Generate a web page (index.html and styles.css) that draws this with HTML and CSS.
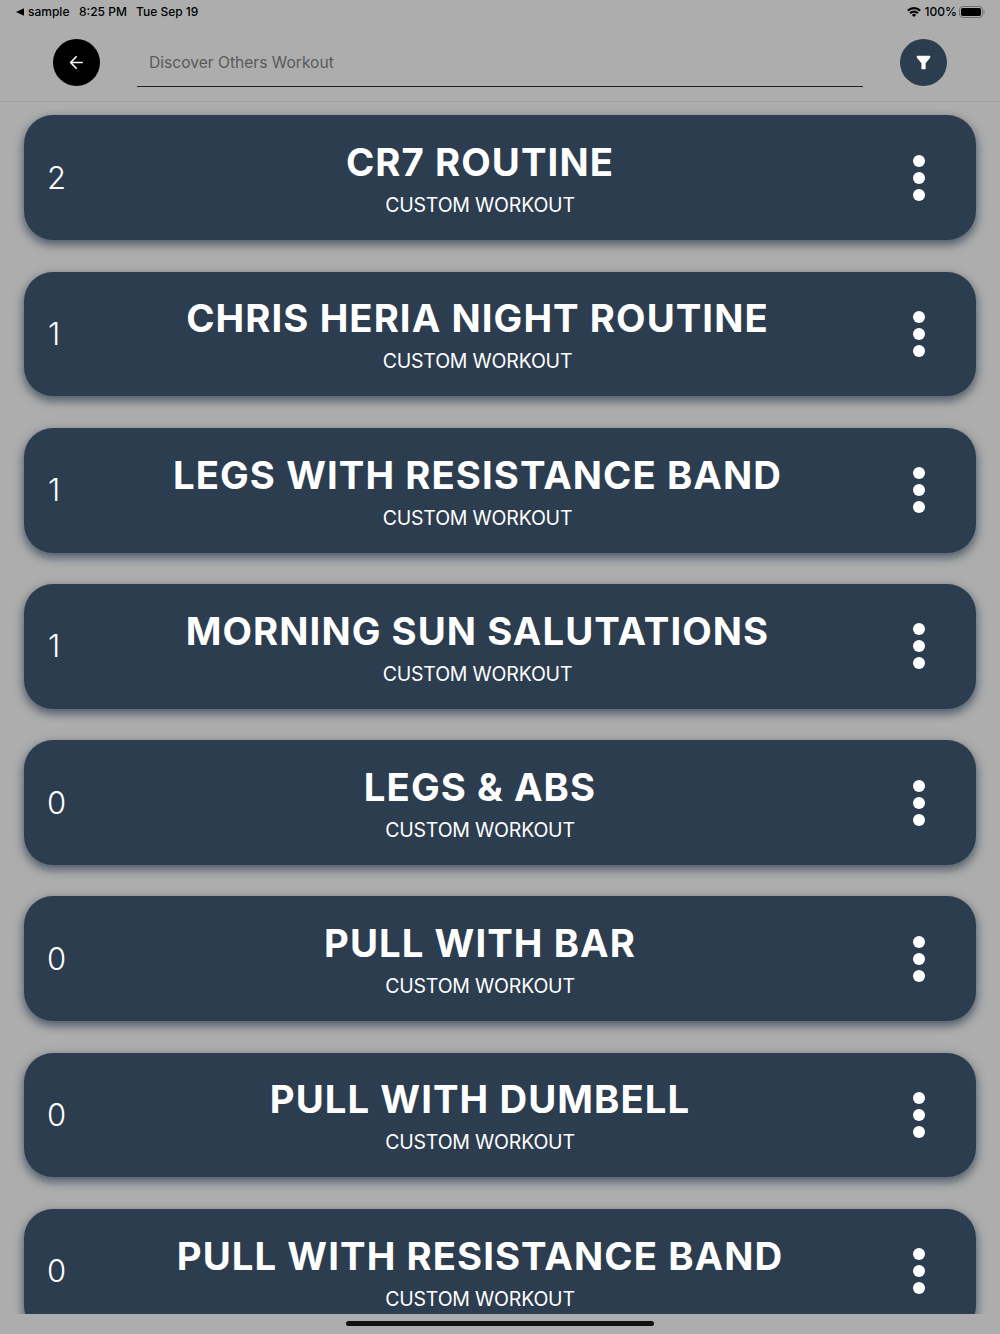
FILE: index.html
```html
<!DOCTYPE html>
<html lang="en">
<head>
  <meta charset="UTF-8" />
  <meta name="viewport" content="width=device-width, initial-scale=1.0"/>
  <title>Discover Workouts</title>
  <link rel="stylesheet" href="styles.css">
</head>
<body>
  <div class="status-bar">
    <div class="status-left">
      <svg width="8" height="8" viewBox="0 0 8 8"><path d="M8 0.3v7.4L0 4z"/></svg>
      <span class="app-name">sample</span>
      <span class="time">8:25 PM</span>
      <span class="date">Tue Sep 19</span>
    </div>
    <div class="status-right">
      <svg class="wifi" width="14" height="10" viewBox="0 0 14 10" fill="none" stroke="#000" stroke-width="2.1">
        <path d="M0.8 3.7a8.8 8.8 0 0 1 12.4 0"/>
        <path d="M3.1 6.2a5.6 5.6 0 0 1 7.8 0"/>
        <path d="M7 10L4.9 7.9a3 3 0 0 1 4.2 0z" fill="#000" stroke="none"/>
      </svg>
      <span class="percent">100%</span>
      <svg width="26" height="12" viewBox="0 0 26 12">
        <rect x="0.5" y="0.5" width="23" height="11" rx="3.2" fill="none" stroke="#6f6f6f"/>
        <rect x="2" y="2" width="20" height="8" rx="1.8"/>
        <path d="M24.6 4c1.3.4 1.3 3.6 0 4z" fill="#6f6f6f"/>
      </svg>
    </div>
  </div>

  <header class="header">
    <button class="round-btn back-btn">
      <svg width="15" height="15" viewBox="0 0 15 15" fill="none" stroke="#fff" stroke-width="1.6" stroke-linecap="round" stroke-linejoin="round">
        <path d="M13.2 7.5H1.6M7.2 1.8L1.6 7.5l5.6 5.7"/>
      </svg>
    </button>
    <input class="search" type="text" placeholder="Discover Others Workout">
    <button class="round-btn filter-btn">
      <svg width="15" height="15" viewBox="0 0 14 14" fill="#fff">
        <path d="M1.2 0.7h11.6q.5 0 .5.5v1.2L9 7.6v5.2q0 .6-.6.6H5.7q-.6 0-.6-.6V7.6L.7 2.4V1.2q0-.5.5-.5z"/>
      </svg>
    </button>
  </header>

  <main class="list">
    <div class="card">
      <span class="count">2</span>
      <div class="info"><h2>CR7 ROUTINE</h2><p>CUSTOM WORKOUT</p></div>
      <div class="dots"><i></i><i></i><i></i></div>
    </div>
    <div class="card">
      <span class="count one">1</span>
      <div class="info"><h2>CHRIS HERIA NIGHT ROUTINE</h2><p>CUSTOM WORKOUT</p></div>
      <div class="dots"><i></i><i></i><i></i></div>
    </div>
    <div class="card">
      <span class="count one">1</span>
      <div class="info"><h2>LEGS WITH RESISTANCE BAND</h2><p>CUSTOM WORKOUT</p></div>
      <div class="dots"><i></i><i></i><i></i></div>
    </div>
    <div class="card">
      <span class="count one">1</span>
      <div class="info"><h2>MORNING SUN SALUTATIONS</h2><p>CUSTOM WORKOUT</p></div>
      <div class="dots"><i></i><i></i><i></i></div>
    </div>
    <div class="card">
      <span class="count">0</span>
      <div class="info"><h2>LEGS &amp; ABS</h2><p>CUSTOM WORKOUT</p></div>
      <div class="dots"><i></i><i></i><i></i></div>
    </div>
    <div class="card">
      <span class="count">0</span>
      <div class="info"><h2>PULL WITH BAR</h2><p>CUSTOM WORKOUT</p></div>
      <div class="dots"><i></i><i></i><i></i></div>
    </div>
    <div class="card">
      <span class="count">0</span>
      <div class="info"><h2>PULL WITH DUMBELL</h2><p>CUSTOM WORKOUT</p></div>
      <div class="dots"><i></i><i></i><i></i></div>
    </div>
    <div class="card">
      <span class="count">0</span>
      <div class="info"><h2>PULL WITH RESISTANCE BAND</h2><p>CUSTOM WORKOUT</p></div>
      <div class="dots"><i></i><i></i><i></i></div>
    </div>
  </main>

  <footer class="home-area"><div class="home-indicator"></div></footer>
</body>
</html>
```

FILE: styles.css
```css
* {
  box-sizing: border-box;
}
body {
  margin: 0;
  height: 100vh;
  display: flex;
  flex-direction: column;
  overflow: hidden;
  background: #adadad;
  font-family: Inter, "Liberation Sans", sans-serif;
}
.status-bar {
  height: 24px;
  flex: none;
  display: flex;
  justify-content: space-between;
  align-items: center;
  padding: 0 15px 0 16px;
  font-size: 12px;
  font-weight: 500;
  line-height: 24px;
  color: #000;
}
.status-left,
.status-right {
  display: flex;
  align-items: center;
}
.app-name {
  margin-left: 4px;
  width: 51px;
}
.time {
  width: 57px;
}
.percent {
  margin: 0 2px 0 4px;
}
.header {
  height: 78px;
  flex: none;
  display: flex;
  align-items: flex-start;
  padding: 15px 53px 0;
  border-bottom: 1px solid #9d9d9d;
}
.round-btn {
  width: 47px;
  height: 47px;
  flex: none;
  border: none;
  border-radius: 50%;
  padding: 0;
  display: flex;
  align-items: center;
  justify-content: center;
}
.back-btn {
  background: #000;
}
.filter-btn {
  background: #2c3d4f;
}
.search {
  flex: 1;
  min-width: 0;
  height: 48px;
  margin: 0 37.5px 0 37px;
  padding: 0 12px;
  border: none;
  border-bottom: 1px solid #222;
  border-radius: 0;
  outline: none;
  background: none;
  font-family: inherit;
  font-size: 15.6px;
}
.search::placeholder {
  color: #5a5a5a;
  opacity: 1;
}
.list {
  flex: 1;
  min-height: 0;
  overflow: hidden;
  display: flex;
  flex-direction: column;
  gap: 31.4px;
  padding: 13.4px 23.6px 0;
}
.card {
  height: 124.8px;
  flex: none;
  display: flex;
  align-items: center;
  padding: 0 32.4px 0 23.4px;
  border-radius: 29px;
  background: #2c3d4f;
  color: #fff;
  box-shadow: 0 4px 10px 1px rgba(44, 61, 79, 0.7);
}
.count {
  width: 19px;
  font-size: 31px;
  font-weight: 300;
  line-height: 36px;
}
.count.one {
  width: 14px;
  text-indent: 1px;
}
.info {
  flex: 1;
  padding-top: 2px;
  text-align: center;
}
.info h2 {
  margin: 0;
  padding-left: 1px;
  font-size: 38.3px;
  font-weight: 700;
  line-height: 46px;
  letter-spacing: 1.07px;
  white-space: nowrap;
}
.info p {
  margin: 8px 0 0;
  padding-left: 1px;
  font-size: 19.5px;
  line-height: 25px;
  letter-spacing: -0.2px;
}
.dots {
  width: 51px;
  display: flex;
  flex-direction: column;
  align-items: center;
  gap: 5px;
}
.dots i {
  width: 12px;
  height: 12px;
  border-radius: 50%;
  background: #fff;
}
.home-area {
  height: 20px;
  flex: none;
  display: flex;
  justify-content: center;
  padding-top: 7px;
}
.home-indicator {
  width: 308px;
  height: 5px;
  border-radius: 3px;
  background: #111;
}
```
